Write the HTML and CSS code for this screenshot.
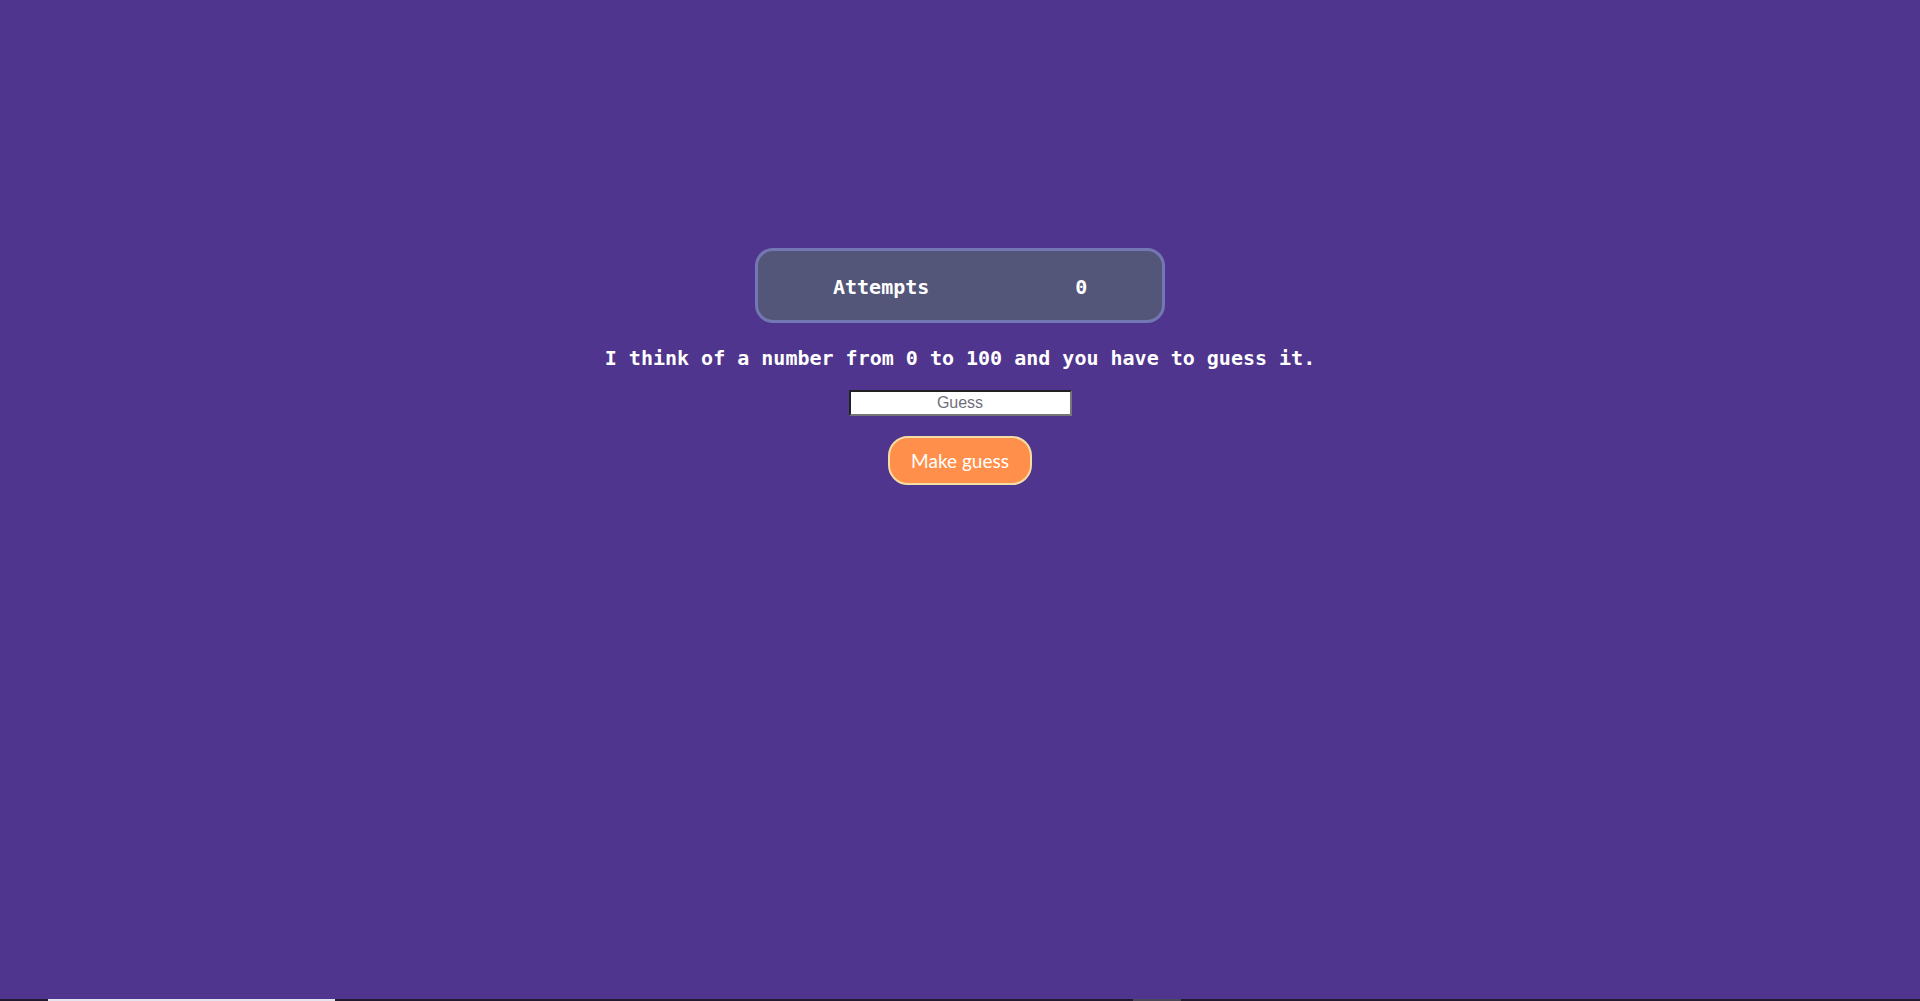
FILE: index.html
```html
<!DOCTYPE html>
<html lang="en">
<head>
<meta charset="utf-8">
<title>Guess the number</title>
<link rel="stylesheet" href="styles.css">
</head>
<body>
<main class="game">
  <div class="score">
    <span class="score-label">Attempts</span>
    <span class="score-value">0</span>
  </div>
  <p class="intro">I think of a number from 0 to 100 and you have to guess it.</p>
  <input class="guess-input" type="text" placeholder="Guess">
  <button class="guess-btn" type="button">Make guess</button>
</main>
<div class="taskbar">
  <span class="task-active"></span>
  <span class="task-thumb"></span>
</div>
</body>
</html>
```
FILE: styles.css
```css
html, body {
  margin: 0;
  height: 100%;
}
body {
  background: #4f358e;
  overflow: hidden;
}
.game {
  display: flex;
  flex-direction: column;
  align-items: center;
  padding-top: 248px;
  font-family: "DejaVu Sans Mono", monospace;
  color: #ffffff;
}
.score {
  box-sizing: border-box;
  width: 410px;
  height: 75px;
  border: 3px solid #7377b3;
  border-radius: 18px;
  background: #535678;
  display: flex;
  align-items: center;
  padding-left: 75px;
  padding-top: 2px;
  gap: 146px;
  font-size: 20px;
  font-weight: bold;
}
.intro {
  margin: 23px 0 0;
  font-size: 20px;
  font-weight: bold;
  line-height: 24px;
}
.guess-input {
  box-sizing: border-box;
  margin-top: 20px;
  width: 223px;
  height: 26px;
  font-family: "Liberation Sans", Arial, sans-serif;
  font-size: 16px;
  text-align: center;
  border: 2px inset #767676;
  padding: 1px 2px;
  background: #ffffff;
}
.guess-input::placeholder {
  color: #6f6f7a;
}
.guess-btn {
  box-sizing: border-box;
  margin-top: 20px;
  width: 144px;
  height: 49px;
  border: 2px solid #f3dfa6;
  border-radius: 20px;
  background: #ff8f4a;
  color: #ffffff;
  font-family: "Lato", sans-serif;
  font-size: 19px;
  cursor: pointer;
}
.taskbar {
  position: fixed;
  left: 0;
  right: 0;
  bottom: 0;
  height: 2px;
  background: #221a30;
}
.task-active {
  position: absolute;
  left: 48px;
  width: 287px;
  top: 0;
  bottom: 0;
  background: #e6e3ee;
}
.task-thumb {
  position: absolute;
  left: 1133px;
  width: 48px;
  top: 0;
  bottom: 0;
  background: #4b4658;
}
```
